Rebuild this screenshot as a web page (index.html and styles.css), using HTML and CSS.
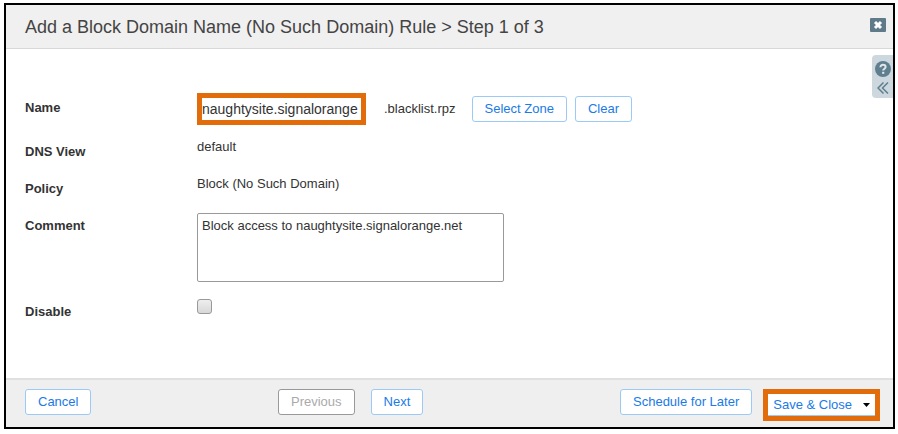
FILE: index.html
```html
<!DOCTYPE html>
<html lang="en">
<head>
    <meta charset="UTF-8">
    <meta name="viewport" content="width=device-width, initial-scale=1.0">
    <title>Add a Block Domain Name Rule</title>
    <link rel="stylesheet" href="styles.css">
</head>
<body>
    <form class="wizard">
        <header class="wizard-header">
            <h1>Add a Block Domain Name (No Such Domain) Rule &gt; Step 1 of 3</h1>
            <button type="button" class="close-btn" aria-label="Close">
                <svg width="16" height="14" viewBox="0 0 16 14">
                    <rect width="16" height="14" rx="1" fill="#5f7b8a"/>
                    <path d="M5 4l6 6M11 4l-6 6" stroke="#fff" stroke-width="3"/>
                </svg>
            </button>
        </header>

        <main class="wizard-body">
            <div class="row name-row">
                <label class="label" for="name">Name</label>
                <div class="name-field">
                    <input type="text" id="name" class="name-input" value="naughtysite.signalorange">
                    <span class="zone">.blacklist.rpz</span>
                    <div class="zone-buttons">
                        <button type="button" class="btn">Select Zone</button>
                        <button type="button" class="btn">Clear</button>
                    </div>
                </div>
            </div>
            <div class="row">
                <span class="label">DNS View</span>
                <span>default</span>
            </div>
            <div class="row">
                <span class="label">Policy</span>
                <span>Block (No Such Domain)</span>
            </div>
            <div class="row comment-row">
                <label class="label" for="comment">Comment</label>
                <textarea id="comment" class="comment">Block access to naughtysite.signalorange.net</textarea>
            </div>
            <div class="row">
                <label class="label" for="disable">Disable</label>
                <input type="checkbox" id="disable" class="checkbox">
            </div>

            <!-- help panel handle -->
            <aside class="help-tab">
                <button type="button" class="icon-btn" aria-label="Help">
                    <svg width="16" height="16" viewBox="0 0 16 16">
                        <circle cx="8" cy="8" r="8" fill="#5f7f8f"/>
                        <path d="M5.4 6.3C5.4 4.7 6.5 3.8 8 3.8s2.6.9 2.6 2.2c0 1.7-2.4 1.8-2.4 3.6" fill="none" stroke="#dfe7eb" stroke-width="2"/>
                        <rect x="7.1" y="10.8" width="2.2" height="2" fill="#dfe7eb"/>
                    </svg>
                </button>
                <button type="button" class="icon-btn" aria-label="Expand">
                    <svg width="12" height="12" viewBox="0 0 12 12">
                        <path d="M6.5 .5L1 6l5.5 5.5M11 .5L5.5 6l5.5 5.5" fill="none" stroke="#5f7f8f" stroke-width="1.5"/>
                    </svg>
                </button>
            </aside>
        </main>

        <footer class="wizard-footer">
            <div>
                <button type="button" class="btn">Cancel</button>
            </div>
            <div class="step-buttons">
                <button type="button" class="btn" disabled>Previous</button>
                <button type="button" class="btn">Next</button>
            </div>
            <div class="save-buttons">
                <button type="button" class="btn">Schedule for Later</button>
                <button type="button" class="btn save-btn">Save &amp; Close
                    <svg width="7" height="4" viewBox="0 0 7 4"><path d="M0 0h7L3.5 4z" fill="#000"/></svg>
                </button>
            </div>
        </footer>
    </form>
</body>
</html>
```

FILE: styles.css
```css
* {
    box-sizing: border-box;
}
body {
    margin: 0;
    padding: 3px 3px 5px 4px;
    min-height: 100vh;
    display: flex;
    background-color: #fff;
    color: #333;
    font-family: "Liberation Sans", Arial, sans-serif;
    font-size: 13px;
    line-height: 16px;
}
button,
input,
textarea {
    font: inherit;
    color: inherit;
}
.wizard {
    flex: 1;
    display: flex;
    flex-direction: column;
    border: 2px solid #000;
}
/* Header */
.wizard-header {
    display: flex;
    align-items: center;
    justify-content: space-between;
    height: 44px;
    padding: 0 7px 0 19px;
    background-color: #f0f0f0;
    border-bottom: 1px solid #d8d8d8;
}
.wizard-header h1 {
    margin: 0;
    font-size: 18px;
    line-height: 24px;
    font-weight: normal;
    color: #444;
}
.close-btn,
.icon-btn {
    display: block;
    padding: 0;
    border: none;
    background: none;
    cursor: pointer;
}
.close-btn svg,
.icon-btn svg {
    display: block;
}
.close-btn {
    margin-bottom: 4px;
}
/* Form */
.wizard-body {
    position: relative;
    flex: 1;
    display: flex;
    flex-direction: column;
    gap: 14px;
    padding: 44px 19px 20px;
}
.row {
    display: grid;
    grid-template-columns: 172px 1fr;
    align-items: start;
    min-height: 23px;
}
.label {
    padding-top: 5px;
    font-weight: bold;
}
.name-row .label {
    padding-top: 7px;
}
.name-field {
    display: flex;
    align-items: center;
}
.name-input {
    width: 169px;
    height: 32px;
    padding: 0;
    border: 5px solid #e36c0a;
    background-color: #fff;
    font-size: 14px;
}
.zone {
    margin: 0 16px 0 18px;
}
.zone-buttons {
    display: flex;
    gap: 8px;
}
.comment-row {
    margin-bottom: 3px;
}
.comment {
    display: block;
    width: 307px;
    height: 69px;
    padding: 4px;
    border: 1px solid #999;
    border-radius: 2px;
    resize: none;
}
.checkbox {
    appearance: none;
    width: 15px;
    height: 15px;
    margin: 0;
    border: 1px solid #999;
    border-radius: 3px;
    background-image: linear-gradient(#eee, #d8d8d8);
}
.checkbox:checked {
    background: #1a7ae6;
}
.help-tab {
    position: absolute;
    top: 6px;
    right: 0;
    display: flex;
    flex-direction: column;
    align-items: center;
    gap: 5px;
    width: 21px;
    padding: 6px 0 4px;
    border-radius: 4px 0 0 4px;
    background-color: #cdd8de;
}
/* Buttons */
.btn {
    height: 26px;
    padding: 0 12px;
    border: 1px solid #9ccaf7;
    border-radius: 3px;
    background-color: #fff;
    color: #1a7ae6;
    white-space: nowrap;
    cursor: pointer;
}
.btn:disabled {
    border-color: #999;
    color: #aaa;
    cursor: default;
}
.save-btn {
    display: flex;
    align-items: center;
    gap: 11px;
    height: 32px;
    padding: 0 5px;
    border: 5px solid #e36c0a;
    border-radius: 0;
    box-shadow: inset 0 -1px #9ccaf7;
}
/* Footer */
.wizard-footer {
    display: grid;
    grid-template-columns: 253px 1fr auto;
    align-items: start;
    padding: 9px 13px 6px 19px;
    background-color: #efefef;
    border-top: 2px solid #e0e0e0;
}
.step-buttons {
    display: flex;
    gap: 16px;
}
.save-buttons {
    display: flex;
    align-items: flex-start;
    gap: 11px;
}
```
